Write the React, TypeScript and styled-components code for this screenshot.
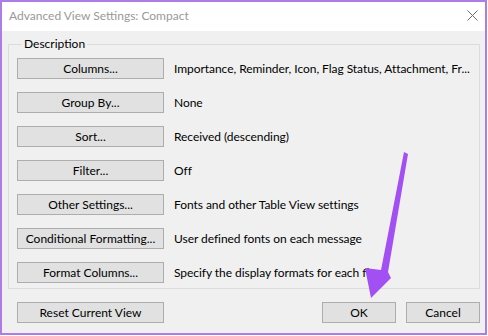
import React from 'react';
import styled, { createGlobalStyle } from 'styled-components';

const GlobalStyle = createGlobalStyle`
    html, body {
        margin: 0;
        padding: 0;
        background: #ffffff;
    }
    body {
        font-family: Lato, 'Noto Sans', sans-serif;
        font-size: 12px;
        color: #000000;
    }
`;

type ViewRow = {
    label: string;
    value: string;
};

const rows: ViewRow[] = [
    { label: 'Columns...', value: 'Importance, Reminder, Icon, Flag Status, Attachment, Fr...' },
    { label: 'Group By...', value: 'None' },
    { label: 'Sort...', value: 'Received (descending)' },
    { label: 'Filter...', value: 'Off' },
    { label: 'Other Settings...', value: 'Fonts and other Table View settings' },
    { label: 'Conditional Formatting...', value: 'User defined fonts on each message' },
    { label: 'Format Columns...', value: 'Specify the display formats for each fie' },
];

function App() {
    return (
        <>
            <GlobalStyle />
            <Window>
                <TitleBar>
                    <Title>Advanced View Settings: Compact</Title>
                    <CloseIcon width="11" height="11" viewBox="0 0 11 11">
                        <path d="M0.5 0.5 L10.5 10.5 M10.5 0.5 L0.5 10.5" stroke="#6b6b6b" strokeWidth="1" />
                    </CloseIcon>
                </TitleBar>
                <Body>
                    <GroupBox>
                        <Legend>Description</Legend>
                        <RowGrid>
                            {rows.map((row) => (
                                <React.Fragment key={row.label}>
                                    <DialogButton width={147}>{row.label}</DialogButton>
                                    <Value>{row.value}</Value>
                                </React.Fragment>
                            ))}
                        </RowGrid>
                    </GroupBox>
                    <Footer>
                        <DialogButton width={147}>Reset Current View</DialogButton>
                        <FooterRight>
                            <DialogButton width={74}>OK</DialogButton>
                            <DialogButton width={74}>Cancel</DialogButton>
                        </FooterRight>
                    </Footer>
                </Body>
                <Arrow width="488" height="336" viewBox="0 0 488 336">
                    <defs>
                        <filter id="soft" x="-10%" y="-10%" width="120%" height="120%">
                            <feGaussianBlur stdDeviation="0.6" />
                        </filter>
                    </defs>
                    <polygon
                        points="404,152 408,154 388,272 391,278 371,298 365,268 381,270"
                        fill="#a24ff4"
                        filter="url(#soft)"
                    />
                </Arrow>
            </Window>
        </>
    );
}

const Window = styled.div`
    position: relative;
    width: 483px;
    height: 331px;
    border: 2px solid #ad7ce6;
    background: #f0f0f0;
    display: flex;
    flex-direction: column;
    overflow: hidden;
`;

const TitleBar = styled.div`
    height: 29px;
    background: #ffffff;
    display: flex;
    align-items: center;
    justify-content: space-between;
    padding: 0 7px 0 7px;
`;

const Title = styled.div`
    color: #999999;
    font-size: 12px;
    margin-top: -2px;
`;

const CloseIcon = styled.svg`
    display: block;
    margin-top: -3px;
`;

const Body = styled.div`
    flex: 1;
    display: flex;
    flex-direction: column;
    padding: 5px 5px 0 6px;
`;

const GroupBox = styled.fieldset`
    margin: 0;
    min-width: 0;
    padding: 6px 8px 5px 8px;
    border: 1px solid #dcdcdc;
`;

const Legend = styled.legend`
    padding: 0 2px;
    margin-left: 5px;
    line-height: 16px;
    font-size: 12px;
`;

const RowGrid = styled.div`
    display: grid;
    grid-template-columns: 147px 1fr;
    column-gap: 10px;
    row-gap: 13px;
    align-items: center;
`;

const DialogButton = styled.button<{ width: number }>`
    width: ${(p) => p.width}px;
    height: 21px;
    padding: 0;
    margin: 0;
    background: #e1e1e1;
    border: 1px solid #adadad;
    border-radius: 0;
    font-family: Lato, 'Noto Sans', sans-serif;
    font-size: 12px;
    color: #000000;
    line-height: 19px;
    white-space: nowrap;
`;

const Value = styled.div`
    white-space: nowrap;
    line-height: 16px;
    font-size: 12px;
    letter-spacing: -0.05px;
`;

const Footer = styled.div`
    display: flex;
    justify-content: space-between;
    margin-top: 13px;
    padding: 0 0 0 9px;
`;

const FooterRight = styled.div`
    display: flex;
    gap: 10px;
`;

const Arrow = styled.svg`
    position: absolute;
    left: -2px;
    top: -2px;
    pointer-events: none;
`;

export default App;
